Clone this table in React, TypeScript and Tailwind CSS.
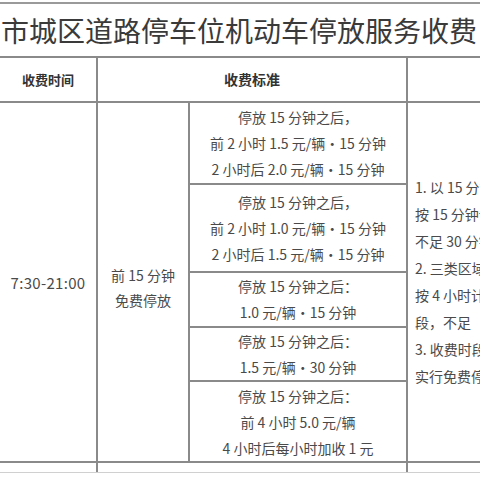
const cjk = { fontFamily: '"Noto Sans CJK SC", "Noto Sans", sans-serif' };

const feeRows = [
  { h: "h-[82px] border-b-2", lines: ["停放 15 分钟之后，", "前 2 小时 1.5 元/辆•15 分钟", "2 小时后 2.0 元/辆•15 分钟"] },
  { h: "h-[89px] border-b-2", lines: ["停放 15 分钟之后，", "前 2 小时 1.0 元/辆•15 分钟", "2 小时后 1.5 元/辆•15 分钟"] },
  { h: "h-[55px] border-b-2", lines: ["停放 15 分钟之后：", "1.0 元/辆•15 分钟"] },
  { h: "h-[55px] border-b-2", lines: ["停放 15 分钟之后：", "1.5 元/辆•30 分钟"] },
  { h: "h-[79px]", lines: ["停放 15 分钟之后：", "前 4 小时 5.0 元/辆", "4 小时后每小时加收 1 元"] },
];

const notes = [
  "1. 以 15 分钟为一个计费单元，",
  "按 15 分钟计费，超过 15 分钟",
  "不足 30 分钟按 30 分钟计费。",
  "2. 三类区域按次收费的，",
  "按 4 小时计为一个计费时",
  "段，不足　4 小时按 4 小时计。",
  "3. 收费时段以外的时间",
  "实行免费停放。",
];

export default function App() {
  return (
    <div className="w-[480px] h-[480px] overflow-hidden bg-white text-[#4a4a4a]" style={cjk}>
      <div className="h-[2px]" />
      <div className="h-[54px] border-t-2 border-[#9a9a9a] flex items-center pl-[1px] whitespace-nowrap text-[28px] text-[#3a3a3a] leading-none">
        市城区道路停车位机动车停放服务收费
      </div>

      <div className="flex h-[45px] border-t-2 border-[#8a8a8a]">
        <div className="w-[98px] shrink-0 border-r-2 border-[#8a8a8a] flex items-center justify-center text-[13px] font-bold text-[#333]">
          收费时间
        </div>
        <div className="w-[310px] shrink-0 border-r-2 border-[#8a8a8a] flex items-center justify-center text-[14px] font-bold text-[#333]">
          收费标准
        </div>
        <div className="flex-1" />
      </div>

      <div className="flex h-[362px] border-t-2 border-b-2 border-[#8a8a8a]">
        <div className="w-[98px] shrink-0 border-r-2 border-[#8a8a8a] flex items-center justify-center pt-[3px] text-[15px] tracking-[0.3px]">
          7:30-21:00
        </div>
        <div className="w-[92px] shrink-0 border-r-2 border-[#8a8a8a] flex flex-col items-center justify-center pt-[12px] text-[14px] leading-[25px]">
          <div>前 15 分钟</div>
          <div>免费停放</div>
        </div>
        <div className="w-[218px] shrink-0 border-r-2 border-[#8a8a8a] flex flex-col">
          {feeRows.map((r, i) => (
            <div
              key={i}
              className={`${r.h} border-[#8a8a8a] flex flex-col items-center justify-center text-[14px] leading-[26px] whitespace-nowrap`}
            >
              {r.lines.map((l, j) => (
                <div key={j}>{l}</div>
              ))}
            </div>
          ))}
        </div>
        <div className="flex-1 overflow-hidden flex flex-col justify-center pl-[7px] text-[14px] leading-[27px] whitespace-nowrap">
          {notes.map((n, i) => (
            <div key={i}>{n}</div>
          ))}
        </div>
      </div>

      <div className="flex h-[10px] border-b border-[#d0d0d0]">
        <div className="w-[98px] shrink-0 border-r-2 border-[#8a8a8a]" />
        <div className="w-[310px] shrink-0 border-r-2 border-[#8a8a8a]" />
      </div>
    </div>
  );
}
